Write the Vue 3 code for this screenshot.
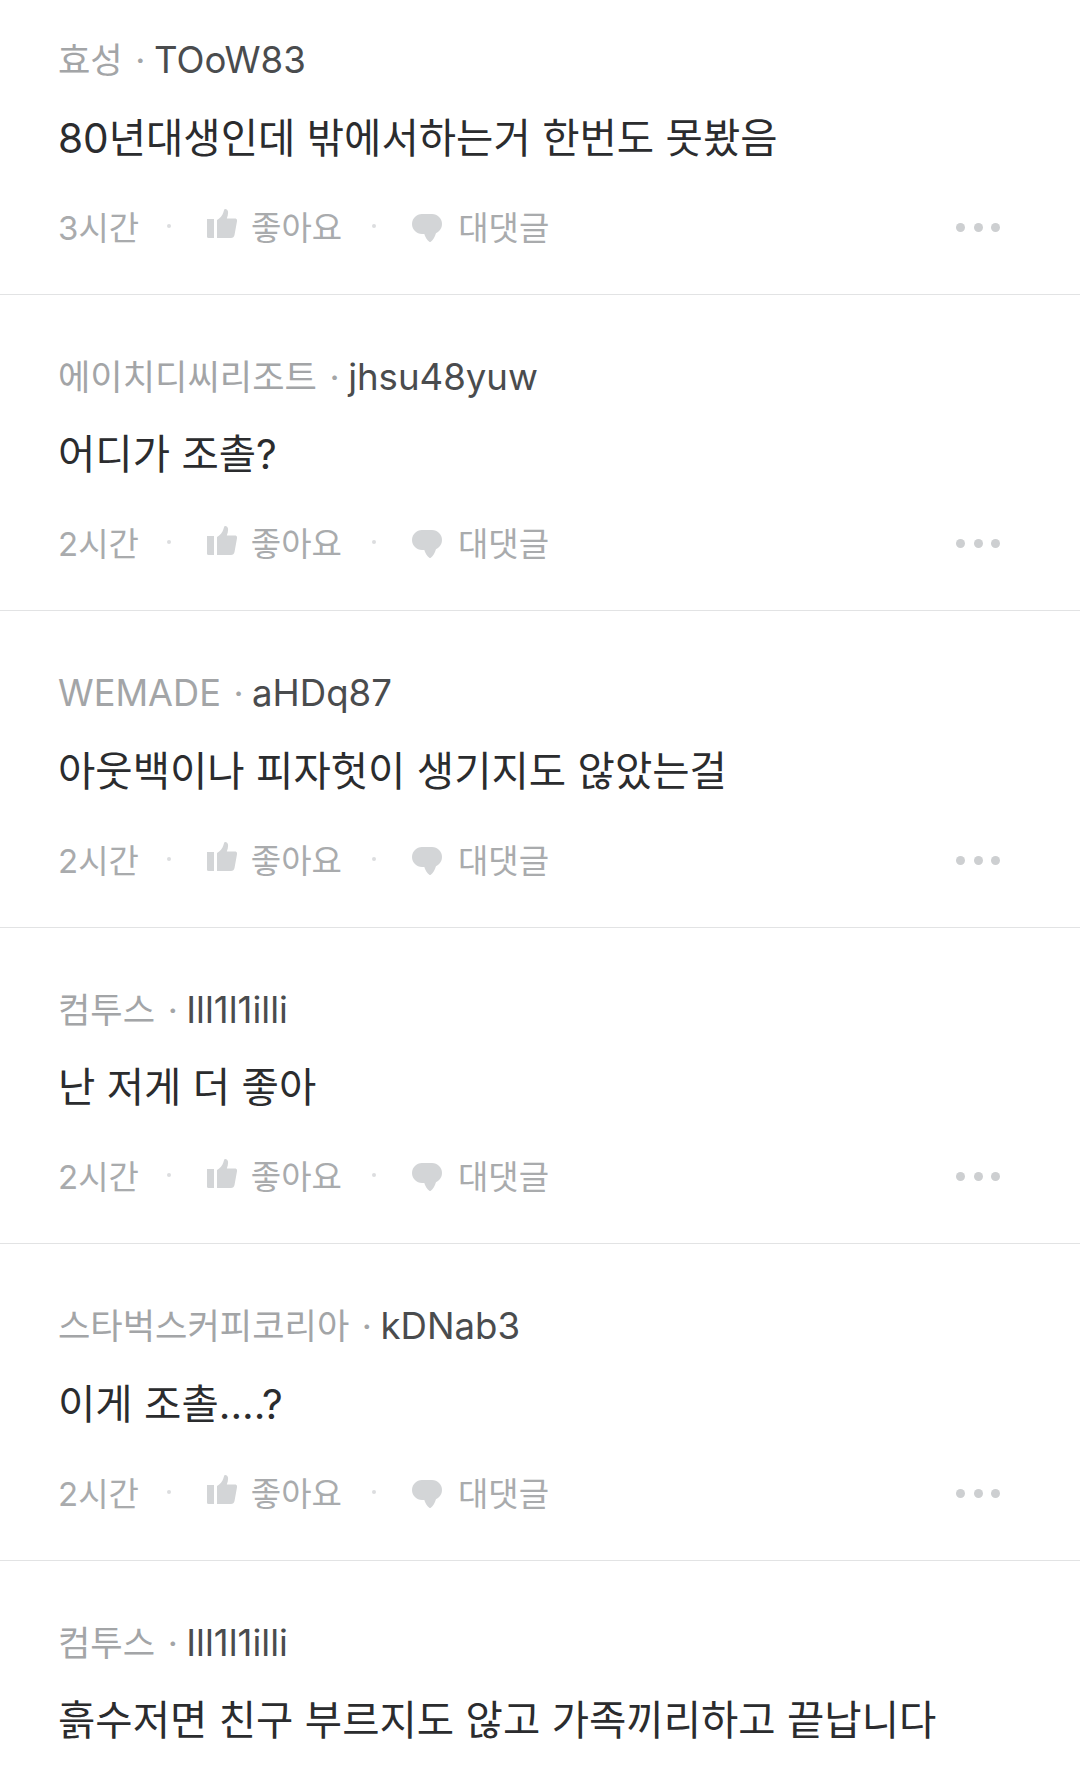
<script setup>
const comments = [
  { company: '효성', nick: 'TOoW83', text: '80년대생인데 밖에서하는거 한번도 못봤음', time: '3시간' },
  { company: '에이치디씨리조트', nick: 'jhsu48yuw', text: '어디가 조촐?', time: '2시간' },
  { company: 'WEMADE', nick: 'aHDq87', text: '아웃백이나 피자헛이 생기지도 않았는걸', time: '2시간', latin: true },
  { company: '컴투스', nick: 'Ill1l1illi', text: '난 저게 더 좋아', time: '2시간' },
  { company: '스타벅스커피코리아', nick: 'kDNab3', text: '이게 조촐....?', time: '2시간' },
  { company: '컴투스', nick: 'Ill1l1illi', text: '흙수저면 친구 부르지도 않고 가족끼리하고 끝납니다', time: '' },
]
</script>

<template>
  <main class="list">
    <article v-for="(c, i) in comments" :key="i" class="comment">
      <div class="meta">
        <span class="company" :class="{ latin: c.latin }">{{ c.company }}</span>
        <span class="sep">·</span>
        <span class="nick">{{ c.nick }}</span>
      </div>
      <p class="body">{{ c.text }}</p>
      <div v-if="c.time" class="actions">
        <span class="time">{{ c.time }}</span>
        <i class="dot"></i>
        <button type="button" class="act like">
          <svg width="30" height="29" viewBox="0 0 30 29">
            <path d="M0 10h7v19H1.500A1.500 1.500 0 0 1 0 27.500z" fill="#d3d5d7" />
            <path d="M10 11c3-1.500 5.500-4.500 6.500-8 .4-1.500.6-3 1.600-3 1.800 0 3 1.500 3 3.500 0 2-.5 4-1.300 6H28c1.500 0 2.400 1.300 2 2.800L27.500 26c-.4 1.800-1.600 3-3.500 3H10z" fill="#d3d5d7" />
          </svg>
          <span>좋아요</span>
        </button>
        <i class="dot dot-reply"></i>
        <button type="button" class="act reply">
          <svg width="30" height="28" viewBox="0 0 30 28">
            <path d="M10 0h10c5.500 0 10 4.500 10 10s-4.500 10-10 10H10C4.500 20 0 15.500 0 10S4.500 0 10 0z" fill="#d3d5d7" />
            <path d="M12 19h12c-1 4-3 7-5.200 8.800-.5.400-1.100.400-1.500 0C15 26 13 23 12 19z" fill="#d3d5d7" />
          </svg>
          <span>대댓글</span>
        </button>
        <div class="more"><i></i><i></i><i></i></div>
      </div>
    </article>
  </main>
</template>

<style scoped>
.list {
  width: 1080px;
  height: 1771px;
  overflow: hidden;
  background: #fff;
  font-family: Inter, "Noto Sans CJK KR", sans-serif;
}

.comment {
  box-sizing: border-box;
  height: 316.5px;
  padding: 59px 80px 0 58px;
  border-bottom: 1.5px solid #e2e3e4;
}

.comment:first-child {
  margin-top: -22px;
}

.meta {
  display: flex;
  align-items: center;
  height: 46px;
  font-size: 35.2px;
  line-height: 46px;
  white-space: nowrap;
}

.company {
  color: #a3a5a7;
}

.company.latin {
  font-size: 36.2px;
}

.sep {
  margin: 0 8.5px 0 12.5px;
  color: #a3a5a7;
}

.nick {
  font-size: 36.6px;
  color: #4a4c4e;
}

.body {
  margin: 27.5px 0 0;
  font-size: 40.6px;
  line-height: 56px;
  color: #2b2c2e;
  white-space: nowrap;
}

.actions {
  display: flex;
  align-items: center;
  height: 46px;
  margin-top: 36px;
  font-size: 33px;
  color: #a9abad;
}

.dot {
  width: 4px;
  height: 4px;
  margin: 0 36px 0 28px;
  border-radius: 50%;
  background: #dcdddf;
}

.dot-reply {
  margin-left: 30px;
}

.act {
  display: flex;
  align-items: center;
  gap: 14px;
  padding: 0;
  border: 0;
  background: none;
  color: inherit;
  font: inherit;
}

.reply {
  gap: 16px;
}

.like svg {
  margin-bottom: 4px;
}

.reply svg {
  margin-top: 4px;
}

.more {
  display: flex;
  gap: 8.3px;
  margin-top: 3px;
  margin-left: auto;
}

.more i {
  width: 9px;
  height: 9px;
  border-radius: 50%;
  background: #cdcfd1;
}
</style>
